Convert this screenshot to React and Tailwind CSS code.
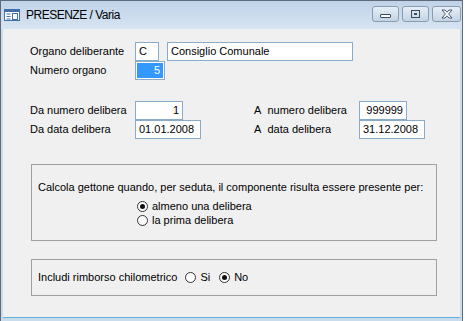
import React from 'react';

const font = { fontFamily: '"Liberation Sans", Arial, sans-serif' };

function Field({ value, className = '', right = false }) {
    return (
        <div
            className={`h-[19px] border border-[#8aaccb] bg-white flex items-center px-[3px] text-[11px] text-black ${right ? 'justify-end' : ''} ${className}`}
        >
            {value}
        </div>
    );
}

function Radio({ checked }) {
    return (
        <span className="w-[11px] h-[11px] rounded-full border-[1.5px] border-[#333] bg-white flex items-center justify-center shrink-0">
            {checked && <span className="w-[5px] h-[5px] rounded-full bg-[#111]" />}
        </span>
    );
}

function TitleButton({ children, className = '' }) {
    return (
        <div className={`h-[16px] rounded-[3px] border border-[#8a9cb0] bg-gradient-to-b from-[#e6eef7] to-[#c3d3e4] flex items-center justify-center ${className}`}>
            {children}
        </div>
    );
}

export default function App() {
    return (
        <div className="w-[465px] h-[321px] bg-white" style={font}>
            <div className="w-[463px] h-[321px] flex flex-col border-l border-t border-r border-[#5d6b7a] bg-[#c9dcee]">
                {/* title bar */}
                <div className="h-[28px] flex items-center bg-gradient-to-b from-[#bfd3e8] to-[#d7e4f2] shrink-0">
                    <svg width="16" height="12" viewBox="0 0 16 12" className="ml-[3px]">
                        <rect x="0.5" y="0.5" width="15" height="11" fill="#ffffff" stroke="#3f6ea8" />
                        <rect x="1" y="1" width="14" height="2" fill="#3f6ea8" />
                        <line x1="2.5" y1="5" x2="6.5" y2="5" stroke="#3f6ea8" />
                        <line x1="2.5" y1="7.5" x2="6.5" y2="7.5" stroke="#3f6ea8" />
                        <line x1="2.5" y1="10" x2="6.5" y2="10" stroke="#3f6ea8" />
                        <rect x="8.5" y="4.5" width="5" height="6" fill="none" stroke="#3f6ea8" />
                    </svg>
                    <span className="ml-[6px] text-[12px] tracking-[-0.5px] text-black">PRESENZE / Varia</span>
                    <div className="ml-auto flex gap-[3px] mr-[1px] -mt-[3px]">
                        <TitleButton className="w-[27px]">
                            <span className="w-[11px] h-[4px] rounded-[1px] border border-[#3b4a5c] bg-white mt-[4px]" />
                        </TitleButton>
                        <TitleButton className="w-[27px]">
                            <span className="w-[9px] h-[8px] border border-[#3b4a5c] flex items-center justify-center">
                                <span className="w-[3px] h-[2px] border border-[#3b4a5c]" />
                            </span>
                        </TitleButton>
                        <TitleButton className="w-[29px]">
                            <svg width="12" height="10" viewBox="0 0 12 10">
                                <path d="M1 1 L4 1 L6 3.2 L8 1 L11 1 L7.6 5 L11 9 L8 9 L6 6.8 L4 9 L1 9 L4.4 5 Z" fill="#ffffff" stroke="#3b4a5c" strokeWidth="0.9" />
                            </svg>
                        </TitleButton>
                    </div>
                </div>

                {/* body */}
                <div className="flex-1 mx-[2px] mb-[3px] bg-[#f0f0f0] border-b border-[#5fb0d8] pl-[27px] pt-[13px] text-[11px] text-black flex flex-col">
                    <div className="flex items-center h-[19px]">
                        <span className="w-[105px]">Organo deliberante</span>
                        <Field value="C" className="w-[24px]" />
                        <Field value="Consiglio Comunale" className="w-[186px] ml-[8px]" />
                    </div>
                    <div className="flex items-center h-[19px]">
                        <span className="w-[105px]">Numero organo</span>
                        <div className="w-[30px] h-[19px] border border-[#8aaccb] bg-white p-[1px]">
                            <div className="h-full bg-[#3399ff] text-white flex items-center justify-end pr-[3px]">5</div>
                        </div>
                    </div>

                    <div className="flex items-center h-[19px] mt-[21px]">
                        <span className="w-[105px]">Da numero delibera</span>
                        <Field value="1" right className="w-[48px]" />
                        <span className="ml-[71px] w-[105px]">A&nbsp; numero delibera</span>
                        <Field value="999999" right className="w-[48px]" />
                    </div>
                    <div className="flex items-center h-[19px]">
                        <span className="w-[105px]">Da data delibera</span>
                        <Field value="01.01.2008" className="w-[66px]" />
                        <span className="ml-[53px] w-[105px]">A&nbsp; data delibera</span>
                        <Field value="31.12.2008" className="w-[66px]" />
                    </div>

                    <div className="w-[406px] h-[77px] border border-[#a0a0a0] mt-[25px] ml-[1px] pl-[6px] pt-[14px]">
                        <div>Calcola gettone quando, per seduta, il componente risulta essere presente per:</div>
                        <div className="ml-[99px] mt-[5px] flex flex-col gap-[2px]">
                            <div className="flex items-center gap-[4px] h-[12px]">
                                <Radio checked />
                                <span>almeno una delibera</span>
                            </div>
                            <div className="flex items-center gap-[4px] h-[12px]">
                                <Radio />
                                <span>la prima delibera</span>
                            </div>
                        </div>
                    </div>

                    <div className="w-[406px] h-[37px] border border-[#a0a0a0] mt-[18px] ml-[1px] pl-[6px] flex items-center">
                        <span>Includi rimborso chilometrico</span>
                        <span className="ml-[8px] flex items-center gap-[4px]">
                            <Radio />
                            <span>Si</span>
                        </span>
                        <span className="ml-[9px] flex items-center gap-[4px]">
                            <Radio checked />
                            <span>No</span>
                        </span>
                    </div>
                </div>
            </div>
        </div>
    );
}
